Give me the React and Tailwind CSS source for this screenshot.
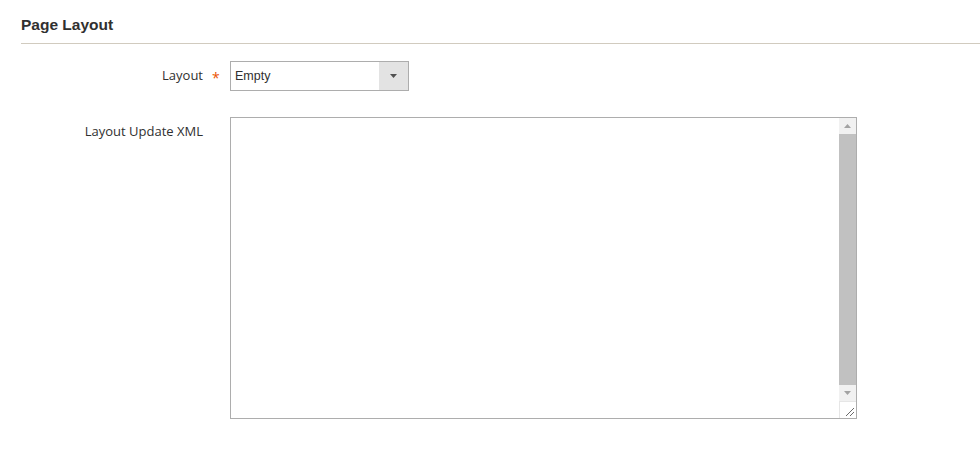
export default function App() {
  return (
    <div className="w-[980px] h-[469px] bg-white overflow-hidden pl-[21px]" style={{ fontFamily: '"Open Sans", sans-serif' }}>
      <div className="h-[44px] border-b border-[#d1cbbf] flex items-end pb-[9px]">
        <h2 className="text-[15.5px] leading-[18px] font-bold text-[#303030]" style={{ fontFamily: '"Liberation Sans", Arial, sans-serif' }}>
          Page Layout
        </h2>
      </div>
      <div className="pt-[17px] flex flex-col gap-[26px]">
        <div className="flex items-center h-[30px]">
          <label className="w-[182px] text-right text-[13px] font-medium text-[#303030]">Layout</label>
          <span className="w-[27px] pl-[9px] text-[#eb5202] text-[14px] leading-none pt-[4px]">*</span>
          <div className="w-[179px] h-[30px] border border-[#adadad] flex" style={{ fontFamily: '"Liberation Sans", Arial, sans-serif' }}>
            <div className="flex-1 flex items-center pl-[4px] text-[12.5px] text-[#303030]">Empty</div>
            <div className="w-[29px] bg-[#e3e3e3] flex items-center justify-center">
              <svg width="7" height="4" viewBox="0 0 7 4"><path d="M0 0h7L3.5 4z" fill="#505050" /></svg>
            </div>
          </div>
        </div>
        <div className="flex items-start">
          <label className="w-[182px] text-right text-[13px] font-medium text-[#303030] pt-[5px]">Layout Update XML</label>
          <span className="w-[27px]" />
          <div className="w-[627px] h-[302px] border border-[#adadad] flex">
            <div className="flex-1" />
            <div className="w-[17px] flex flex-col bg-[#f1f1f1]">
              <div className="h-[16px] flex items-center justify-center">
                <svg width="7" height="4" viewBox="0 0 7 4"><path d="M0 4h7L3.5 0z" fill="#a3a3a3" /></svg>
              </div>
              <div className="flex-1 bg-[#c1c1c1]" />
              <div className="h-[16px] flex items-center justify-center">
                <svg width="7" height="4" viewBox="0 0 7 4"><path d="M0 0h7L3.5 4z" fill="#a3a3a3" /></svg>
              </div>
              <div className="h-[17px] bg-white border-l border-t border-[#e6e6e6] relative">
                <svg className="absolute right-[1px] bottom-[1px]" width="12" height="12" viewBox="0 0 12 12">
                  <path d="M11 3L3 11M11 7L7 11" stroke="#6b6b6b" strokeWidth="1" />
                </svg>
              </div>
            </div>
          </div>
        </div>
      </div>
    </div>
  );
}
